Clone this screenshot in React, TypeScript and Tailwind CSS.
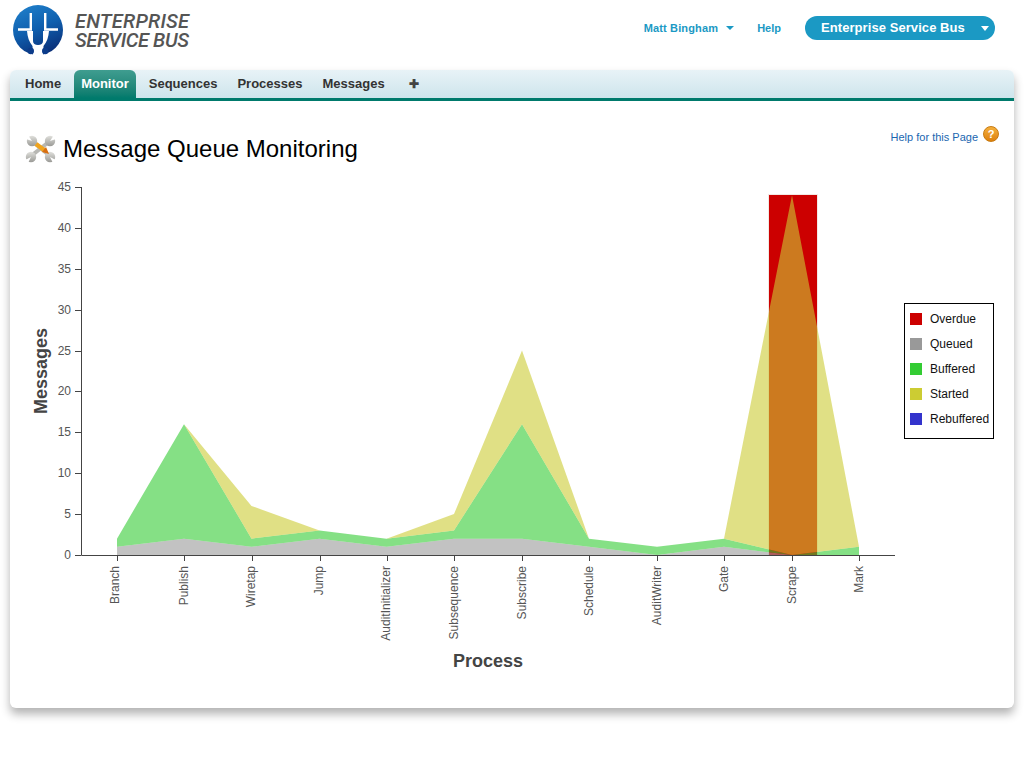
const sans = "font-['Liberation_Sans',Arial,sans-serif]";

const processes = ["Branch", "Publish", "Wiretap", "Jump", "AuditInitializer", "Subsequence", "Subscribe", "Schedule", "AuditWriter", "Gate", "Scrape", "Mark"];
const tickX = [117, 184, 251.5, 319.5, 386.5, 454, 522, 589, 657, 724, 792, 859];
const queued = [1, 2, 1, 2, 1, 2, 2, 1, 0, 1, 0, 0];
const buffered = [2, 16, 2, 3, 2, 3, 16, 2, 1, 2, 0, 1];
const started = [2, 16, 6, 3, 2, 5, 25, 2, 1, 2, 44, 1];
const zero = tickX.map(() => 0);

const legend = [
  ["Overdue", "#cc0000"],
  ["Queued", "#999999"],
  ["Buffered", "#33cc33"],
  ["Started", "#cccc33"],
  ["Rebuffered", "#3333cc"],
];

const yFor = (v: number) => 555 - v * 8.178;

function band(lower: number[], upper: number[]) {
  const top = upper.map((v, i) => `${tickX[i]},${yFor(v)}`);
  const bottom = lower.map((v, i) => `${tickX[i]},${yFor(v)}`).reverse();
  return [...top, ...bottom].join(" ");
}

function Logo() {
  return (
    <svg width="52" height="52" viewBox="0 0 52 52" className="block">
      <defs>
        <linearGradient id="logoBlue" x1="0.2" y1="0" x2="0.6" y2="1">
          <stop offset="0" stopColor="#1f7fca" />
          <stop offset="0.5" stopColor="#0f5fae" />
          <stop offset="1" stopColor="#0a2f78" />
        </linearGradient>
      </defs>
      <circle cx="26" cy="26" r="25" fill="url(#logoBlue)" />
      <path d="M15 27C15.500 33 17 38 20.500 42L21 52H31L31.500 42C35 38 36.500 33 37 27H31V37C31 39.500 29 41 26 41C23 41 21 39.500 21 37V27Z" fill="#fff" />
      <path d="M6 25.500H18.800V9M46 25.500H33.200V9" stroke="#fff" strokeWidth="2.400" fill="none" />
      <circle cx="18.800" cy="47" r="3.200" fill="#0c3c8a" />
      <circle cx="33.200" cy="47" r="3.200" fill="#0c3c8a" />
    </svg>
  );
}

function ToolsIcon() {
  return (
    <svg width="32" height="28" viewBox="0 0 32 28" className="block">
      <defs>
        <linearGradient id="steel" x1="0" y1="0" x2="0" y2="1">
          <stop offset="0" stopColor="#e0e0dc" />
          <stop offset="1" stopColor="#9a9a96" />
        </linearGradient>
      </defs>
      <path d="M7 6L25 21" stroke="#b8b8b4" strokeWidth="4" />
      <path d="M25 6L6 21" stroke="#b8b8b4" strokeWidth="4" />
      <circle cx="7" cy="6" r="5.200" fill="url(#steel)" />
      <circle cx="25" cy="6" r="5.200" fill="url(#steel)" />
      <circle cx="6" cy="22" r="5.200" fill="url(#steel)" />
      <circle cx="25" cy="22" r="5.200" fill="url(#steel)" />
      <path d="M3 0L7 6L1 4ZM29 0L25 6L31 4ZM0 25L6 22L3 28ZM31 25L25 22L28 28Z" fill="#fff" />
      <path d="M11 9L19 15" stroke="#f0a41e" strokeWidth="4.500" />
      <path d="M17 17L21 12L24 19Z" fill="#d96f10" />
    </svg>
  );
}

function HelpBadge() {
  return (
    <span className="flex h-4 w-4 items-center justify-center rounded-full border border-[#c87a10] bg-gradient-to-b from-[#f5b03a] to-[#dd8008] text-[11px] font-bold leading-none text-white">
      ?
    </span>
  );
}

function Chart() {
  return (
    <svg width="1004" height="520" viewBox="10 175 1004 520" className="block">
      <g fontFamily="'Liberation Sans', Arial, sans-serif" fill="#555">
        <rect x="768" y="194" width="50" height="361" fill="#f2e8e4" />
        <rect x="769" y="195" width="48" height="360" fill="#cc0000" />
        <polygon points={band(zero, queued)} fill="#999999" fillOpacity="0.6" />
        <polygon points={band(queued, buffered)} fill="#33cc33" fillOpacity="0.6" />
        <polygon points={band(buffered, started)} fill="#cccc33" fillOpacity="0.6" />

        <path d="M81.500 187V555.500H895" stroke="#444" fill="none" />
        {[0, 5, 10, 15, 20, 25, 30, 35, 40, 45].map((v) => (
          <g key={v}>
            <path d={`M75 ${Math.round(yFor(v)) + 0.5}H81`} stroke="#444" />
            <text x="71" y={yFor(v) + 4} fontSize="12" textAnchor="end">{v}</text>
          </g>
        ))}
        {processes.map((name, i) => (
          <g key={name}>
            <path d={`M${Math.round(tickX[i]) + 0.5} 555V561`} stroke="#444" />
            <text transform={`translate(${tickX[i] + (i === 0 ? 2 : 3.500)} 566) rotate(-90)`} fontSize="12" textAnchor="end">{name}</text>
          </g>
        ))}
        <text transform="translate(47 371) rotate(-90)" fontSize="18" fontWeight="700" textAnchor="middle" fill="#444">Messages</text>
        <text x="488" y="667" fontSize="18" fontWeight="700" textAnchor="middle" fill="#444">Process</text>

        <rect x="904.500" y="303.500" width="89" height="135" fill="#fff" stroke="#000" />
        {legend.map(([label, color], i) => (
          <g key={label}>
            <rect x="910" y={313 + i * 25} width="12" height="12" fill={color} />
            <text x="930" y={323 + i * 25} fontSize="12" fill="#111">{label}</text>
          </g>
        ))}
      </g>
    </svg>
  );
}

export default function App() {
  const tabs = ["Home", "Monitor", "Sequences", "Processes", "Messages"];
  return (
    <div className={`${sans} h-[768px] w-[1024px] overflow-hidden bg-white`}>
      <header className="flex h-[70px] items-start justify-between pl-[12px] pr-[29px]">
        <div className="flex items-start gap-[11px] pt-[4px]">
          <Logo />
          <div className="pt-[8px] font-['Roboto',sans-serif] text-[20px] font-medium italic leading-[19px] text-[#555]">
            <div className="tracking-[0.2px]">ENTERPRISE</div>
            <div className="tracking-[-0.4px]">SERVICE BUS</div>
          </div>
        </div>
        <div className="flex items-center pt-[16px] text-[11px] font-bold text-[#1b99c4]">
          <span className="tracking-[0.15px]">Matt Bingham</span>
          <span className="ml-[8px] h-0 w-0 border-x-[4px] border-t-[4px] border-x-transparent border-t-[#1b99c4]" />
          <span className="ml-[23px]">Help</span>
          <div className="ml-[24px] flex h-[24px] w-[190px] items-center rounded-full bg-[#1b99c4] pl-[16px] text-[13px] tracking-[0.07px] text-white">
            <span>Enterprise Service Bus</span>
            <span className="ml-auto mr-[6px] h-0 w-0 border-x-[4px] border-t-[5px] border-x-transparent border-t-white" />
          </div>
        </div>
      </header>

      <main className="mx-[10px] h-[638px] rounded-[6px] bg-white shadow-[0_6px_10px_rgba(0,0,0,0.3)]">
        <nav className="flex h-[31px] items-end gap-[6px] rounded-t-[6px] border-b-[3px] border-[#007a6c] bg-gradient-to-b from-[#e8f3f7] to-[#cee5ec] pl-[8px] text-[13px] font-bold text-[#333]">
          {tabs.map((tab) => (
            <span
              key={tab}
              className={
                tab === "Monitor"
                  ? "flex h-[28px] items-center rounded-t-[6px] bg-gradient-to-b from-[#3f9d90] to-[#007a6c] px-[7px] text-white"
                  : "flex h-[28px] items-center px-[7px]"
              }
            >
              {tab}
            </span>
          ))}
          <span className="ml-[11px] flex h-[28px] items-center text-[12px] text-[#444]">✚</span>
        </nav>

        <div className="flex h-[74px] items-start justify-between pl-[15px] pr-[15px]">
          <div className="flex items-center gap-[6px] pt-[33px]">
            <ToolsIcon />
            <h1 className="text-[24px] leading-[30px] text-black">Message Queue Monitoring</h1>
          </div>
          <div className="flex items-start gap-[5px] pt-[25px] text-[11px] text-[#1a66b0]">
            <span className="pt-[3px]">Help for this Page</span>
            <HelpBadge />
          </div>
        </div>

        <Chart />
      </main>
    </div>
  );
}
